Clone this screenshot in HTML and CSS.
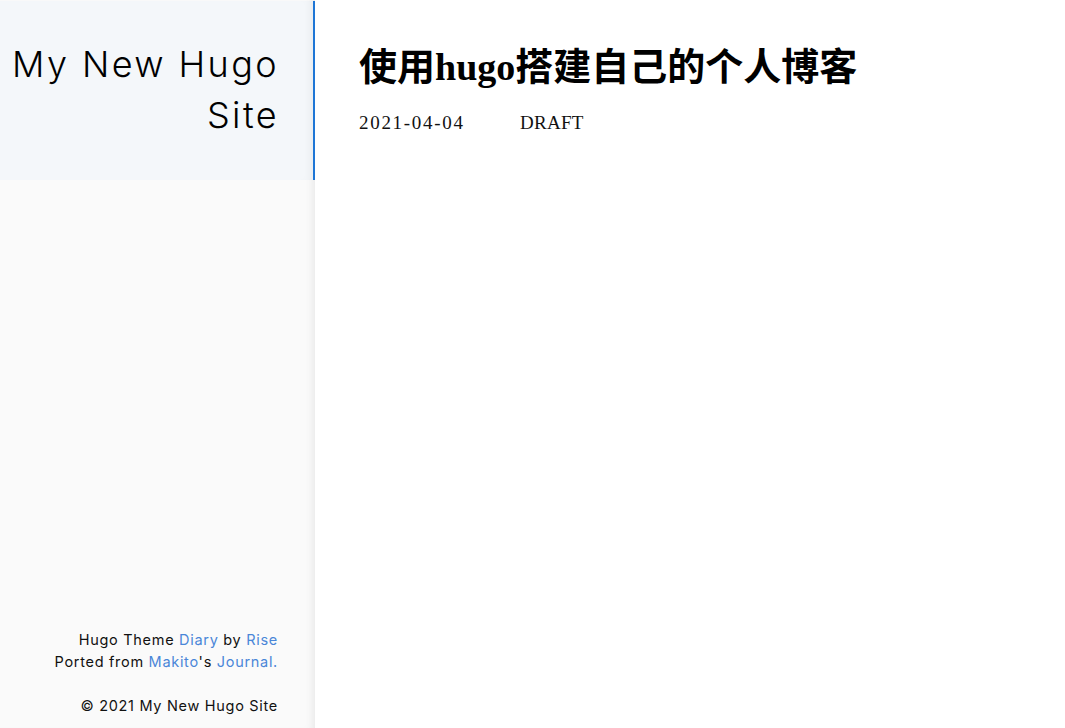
FILE: index.html
```html
<!DOCTYPE html>
<html lang="zh">
<head>
<meta charset="utf-8">
<title>使用hugo搭建自己的个人博客</title>
<link rel="stylesheet" href="styles.css">
</head>
<body>
<div class="layout">
  <aside class="sidebar">
    <header class="site-header">
      <h1 class="site-title">My New Hugo Site</h1>
    </header>
    <footer class="site-footer">
      <p class="credits">Hugo Theme <a href="#">Diary</a> by <a href="#">Rise</a><br>Ported from <a href="#">Makito</a>'s <a href="#">Journal.</a></p>
      <p class="copyright">© 2021 My New Hugo Site</p>
    </footer>
  </aside>
  <main class="content">
    <h2 class="post-title">使用hugo搭建自己的个人博客</h2>
    <div class="post-meta">
      <span class="post-date">2021-04-04</span>
      <span class="post-status">DRAFT</span>
    </div>
  </main>
</div>
</body>
</html>
```

FILE: styles.css
```css
html, body {
  margin: 0;
  padding: 0;
  height: 100%;
  background: #fff;
}
.layout {
  display: flex;
  height: 728px;
}
.sidebar {
  width: 315px;
  flex: none;
  display: flex;
  flex-direction: column;
  background: #fafafa;
  box-shadow: inset -8px 0 8px -6px rgba(0,0,0,0.08);
  font-family: "Inter", "Noto Sans", sans-serif;
}
.site-header {
  height: 179px;
  margin-top: 1px;
  background: #f4f7fa;
  border-right: 2px solid #1e76d6;
  box-shadow: inset -8px 0 8px -6px rgba(0,0,0,0.06);
  padding: 38px 34px 0 0;
  box-sizing: border-box;
}
.site-title {
  margin: 0;
  text-align: right;
  font-size: 36px;
  font-weight: 300;
  line-height: 51px;
  letter-spacing: 2.4px;
  color: #000;
}
.site-footer {
  margin-top: auto;
  padding: 0 37px 11px 0;
  text-align: right;
  font-size: 14.5px;
  font-weight: 400;
  line-height: 22px;
  letter-spacing: 0.7px;
  color: #111;
}
.site-footer p {
  margin: 0;
}
.credits {
  margin-bottom: 22px !important;
}
.site-footer a {
  color: #4a86d8;
  text-decoration: none;
}
.content {
  flex: 1;
  padding: 40px 0 0 44px;
  font-family: "Liberation Serif", "Noto Sans CJK SC", serif;
}
.post-title {
  margin: 0;
  font-size: 38px;
  font-weight: 700;
  line-height: 54px;
  color: #000;
}
.post-meta {
  margin-top: 17px;
  display: flex;
  gap: 57px;
  font-size: 19px;
  line-height: 24px;
  color: #111;
}
.post-date {
  letter-spacing: 1.7px;
  margin-right: -1.7px;
}
.post-status {
  letter-spacing: 0.3px;
}
```
